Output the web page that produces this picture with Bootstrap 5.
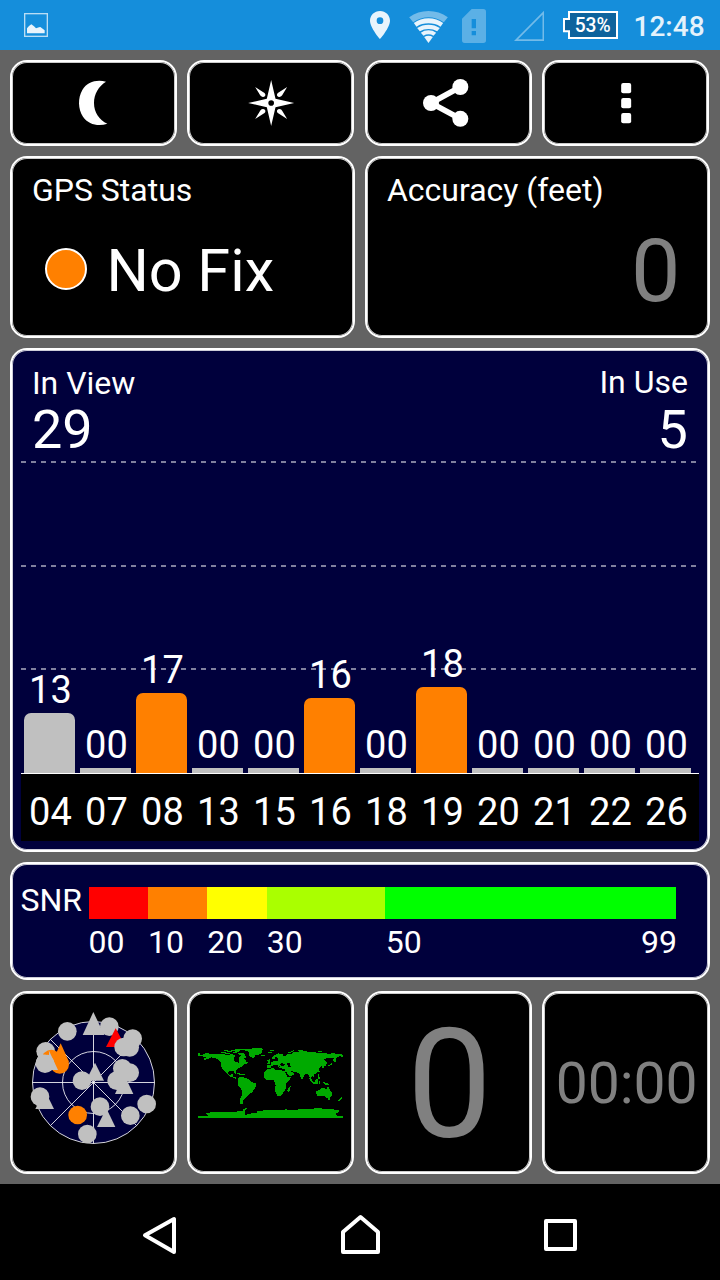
<!DOCTYPE html>
<html lang="en">
<head>
<meta charset="utf-8">
<meta name="viewport" content="width=device-width, initial-scale=1">
<title>GPS Status</title>
<link rel="stylesheet" href="https://cdn.jsdelivr.net/npm/bootstrap@5.3.0/dist/css/bootstrap.min.css">
<script src="https://cdn.jsdelivr.net/npm/bootstrap@5.3.0/dist/js/bootstrap.bundle.min.js"></script>
<style>
  body { font-family: Roboto, "Liberation Sans", sans-serif; background: #636363; color: #fff; width: 720px; height: 1280px; overflow: hidden; }
  svg { display: block; flex: none; }
  .statusbar { height: 50px; background: #158edb; }
  .clock { font-size: 28px; font-weight: 500; line-height: 50px; color: #e4f2fb; padding-top: 2px; }
  .dash { display: grid; grid-template-columns: repeat(4, minmax(0, 1fr)); grid-template-rows: 85.7px 181.6px 503.6px 118.1px 183px; gap: 10.4px 10.45px; height: 1134px; padding: 10px 10.55px 0 9.9px; }
  .tile { background: #000; border: 2px solid #fff; border-radius: 17px; box-shadow: inset 0 0 0 1px rgba(255,255,255,.8); overflow: hidden; }
  .navy { background: #00003c; }
  .span-2 { grid-column: span 2; margin-right: -.5px; }
  .span-4 { grid-column: span 4; margin-right: -.5px; }
  .label { font-size: 32px; line-height: 38px; }
  .dim { color: #808080; }
  .led { width: 42px; height: 42px; border-radius: 50%; background: #ff8000; border: 2px solid #fff; flex: none; }
  .fix { font-size: 59.4px; line-height: 60px; padding-top: 4px; }
  .acc { font-size: 88px; line-height: 88px; }
  .count { font-size: 54px; line-height: 54px; padding-top: 1px; }
  .head { height: 111px; padding: 14px 20px 0; }
  .plot { height: 312px; margin: 0 9px; padding-left: 3px; gap: 5px;
    --dashes: repeating-linear-gradient(90deg, #80809e 0 5px, transparent 5px 10px);
    background: var(--dashes) 0 0/675px 2px no-repeat, var(--dashes) 0 104px/675px 2px no-repeat, var(--dashes) 0 207px/675px 2px no-repeat; }
  .sat { width: 51px; flex: none; }
  .snr-val, .prn { font-size: 38px; line-height: 38px; text-align: center; padding-left: 2px; }
  .snr-val { margin-bottom: 4px; }
  .bar { background: #c0c0c0; }
  .bar.tall { border-radius: 7px 7px 0 0; }
  .bar.used { background: #ff8000; }
  .prns { height: 68px; margin: 0 8.5px 0 9px; padding: 19px 0 0 3px; gap: 5px; background: #000; border-top: 1px solid #fff; }
  .legend { padding: 23px 31px 0 8.5px; }
  .scale { width: 587.5px; height: 32px; }
  .ticks { width: 588.5px; margin-left: -.2px; padding-top: 4px; }
  .timer { font-size: 57px; line-height: 60px; }
  .big { font-size: 152px; line-height: 152px; }
  .navbar-sys { height: 96px; background: #000; padding: 0 60px; }
</style>
</head>
<body>
<header class="statusbar d-flex">
  <svg width="24" height="50" viewBox="72 0 72 150" style="margin-left:24px"><rect x="74" y="41" width="68" height="68" fill="none" stroke="#b9ddf4" stroke-width="4"/><path d="M81 100V85L87 78 94 73 102 79 108 85 117 82 121 81 128 86 134 91V100Z" fill="#e8f4fc"/></svg>
  <div class="d-flex ms-auto">
    <svg width="20" height="50" viewBox="30 0 60 150"><path fill-rule="evenodd" d="M60 33C43 33 30 46 30 62 30 83 60 117 60 117S90 83 90 62C90 46 77 33 60 33ZM60 52A10 10 0 1 1 60 72 10 10 0 0 1 60 52Z" fill="#e8f4fc"/></svg>
    <svg width="39" height="50" viewBox="148.500 0 117 150" style="margin-left:19px"><path d="M149 52Q175 33 207 33T265 52L253 67Q230 52 207 52T161 67Z" fill="#73bbe9"/><g fill="#e8f4fc"><path d="M163 69Q182 55 207 55T251 69L243 80Q227 70 207 70T171 80Z"/><path d="M173 84Q188 74 207 74T241 84L233 94Q221 87 207 87T181 94Z"/><path d="M184 98Q194 91 207 91T230 98L222 107Q215 103 207 103T192 107Z"/><path d="M194 111Q207 103 220 111L207 129Z"/></g></svg>
    <svg width="24" height="50" viewBox="306 0 72 150" style="margin-left:14px"><path fill-rule="evenodd" d="M335 27H370Q378 27 378 35V121Q378 129 370 129H314Q306 129 306 121V56ZM335 57V85H348V57ZM335 93V106H348V93Z" fill="#5bb0e6"/></svg>
    <svg width="30" height="50" viewBox="462 0 90 150" style="margin-left:28px"><path d="M550 38V120.500H468Z" fill="none" stroke="#73bbe9" stroke-width="5"/></svg>
    <svg width="55" height="50" viewBox="609 0 165 150" style="margin-left:19px"><path d="M627 36H771V114H627V94H612V57H627Z" fill="#0d639d" stroke="#fff" stroke-width="6"/><text x="644" y="96" textLength="108" lengthAdjust="spacingAndGlyphs" font-size="60" font-weight="500" fill="#fff">53%</text></svg>
    <div class="clock" style="margin-left:15.500px;width:86.500px">12:48</div>
  </div>
</header>

<main class="dash">
  <button class="tile d-flex align-items-center justify-content-center p-0" aria-label="Night mode">
    <svg width="60" height="60" viewBox="189 219 180 180"><path d="M318 245C290 238 262 245 247 270 233 294 234 327 249 350 265 374 296 380 322 371 298 361 282 337 282 309 282 282 296 258 318 245Z" fill="#fff"/></svg>
  </button>
  <button class="tile d-flex align-items-center justify-content-center p-0" aria-label="Compass">
    <svg width="60" height="60" viewBox="722.500 219 180 180"><path id="c" fill="#fff" fill-rule="evenodd" d="M813 240 826 296 882 309 826 322 813 378 800 322 744 309 800 296ZM813 300.500A8.500 8.500 0 1 0 813 317.500 8.500 8.500 0 0 0 813 300.500ZM765 261 793 279Q797 283 795 287T788 291Q782 290 780 286ZM861 261 833 279Q829 283 831 287T838 291Q844 290 846 286ZM765 357 793 339Q797 335 795 331T788 327Q782 328 780 332ZM861 357 833 339Q829 335 831 331T838 327Q844 328 846 332Z"/></svg>
  </button>
  <button class="tile d-flex align-items-center justify-content-center p-0" aria-label="Share">
    <svg width="60" height="60" viewBox="174 219 180 180"><path d="M301 261 213 309 301 356" fill="none" stroke="#fff" stroke-width="17"/><g fill="#fff"><circle cx="213" cy="309" r="24"/><circle cx="301" cy="261" r="24"/><circle cx="301" cy="356.500" r="24"/></g></svg>
  </button>
  <button class="tile d-flex align-items-center justify-content-center p-0" aria-label="More">
    <svg width="60" height="60" viewBox="707.500 219 180 180" fill="#fff"><rect x="783" y="249" width="30" height="31" rx="6"/><rect x="783" y="294" width="30" height="31" rx="6"/><rect x="783" y="339" width="30" height="31" rx="6"/></svg>
  </button>

  <section class="tile span-2" style="padding:13px 20px 0">
    <div class="label">GPS Status</div>
    <div class="d-flex align-items-center" style="margin:28px 0 0 13px;gap:19.500px"><div class="led"></div><div class="fix">No Fix</div></div>
  </section>
  <section class="tile span-2" style="padding:13px 27.500px 0 20px">
    <div class="label">Accuracy (feet)</div>
    <div class="acc dim text-end" style="margin-top:18px">0</div>
  </section>

  <section class="tile navy span-4">
    <div class="head d-flex justify-content-between">
      <div><div class="label">In View</div><div class="count">29</div></div>
      <div class="text-end"><div class="label" style="margin:-1px 0 1px">In Use</div><div class="count">5</div></div>
    </div>
    <div class="plot d-flex align-items-end" id="plot"></div>
    <div class="prns d-flex" id="prns"></div>
  </section>

  <section class="tile navy span-4 legend d-flex">
    <div class="label" style="width:68.500px;margin-top:-6px">SNR</div>
    <div>
      <div class="scale d-flex" id="scale"></div>
      <div class="ticks label d-flex" id="ticks"></div>
    </div>
  </section>

  <section class="tile">
    <svg width="163" height="179" viewBox="6 9 489 537">
      <g fill="none" stroke="#fff" stroke-width="2.500"><circle cx="250.500" cy="277.500" r="183" fill="#00003c"/><circle cx="250.500" cy="277.500" r="93"/><path d="M67 277.500H434M250.500 94V461M121 148 380 407M380 148 121 407"/></g>
      <g fill="#c0c0c0">
        <circle cx="172" cy="124" r="28"/><circle cx="298" cy="110" r="28"/><path d="M250 66 283 135H218Z"/>
        <path d="M317 115 347 171H288Z" fill="#f00"/>
        <circle cx="368" cy="146" r="28"/><circle cx="341" cy="171" r="28"/><circle cx="359" cy="172" r="28"/>
        <circle cx="107" cy="184" r="28"/>
        <g fill="#ff8000"><circle cx="124" cy="207" r="28"/><circle cx="149" cy="223" r="28"/><path d="M152 160 177 215H127Z"/></g>
        <circle cx="105" cy="221" r="28"/><path d="M117 182 144 240H90Z"/><path d="M98 192 117 184V195Z" fill="#ff8000"/>
        <circle cx="216" cy="272" r="28"/><path d="M255 218 282 272H228Z"/>
        <circle cx="337" cy="235" r="28"/><circle cx="359" cy="248" r="28"/><circle cx="320" cy="272" r="28"/><path d="M342 253 370 312H315Z"/>
        <circle cx="90" cy="320" r="28"/><path d="M104 300 132 357H76Z"/>
        <circle cx="410" cy="342" r="28"/><circle cx="361" cy="377" r="28"/>
        <circle cx="270" cy="350" r="28"/><path d="M289 355 316 411H261Z"/><circle cx="232" cy="432" r="28"/>
        <circle cx="203" cy="375" r="28" fill="#ff8000"/>
      </g>
    </svg>
  </section>
  <section class="tile">
    <svg width="163" height="179" viewBox="-2 -111 489 537" fill="#0a0" shape-rendering="crispEdges">
      <path d="M24 69H30V75H36V78H24ZM36 75 48 69 66 72H96L114 75 126 72 138 78 132 84V93L141 96 147 99 148 84 156 75 162 84 168 91 171 96 177 98 168 102 160 105 156 111 147 114 141 120 138 123 140 132H135L133 124 122 122 114 128 118 136 126 132 130 133 128 139 138 141 140 147 148 148H140L130 143 118 138 108 128 99 117 93 108 93 96 84 87 66 82 54 87 42 90 45 84 52 82 42 80Z"/>
      <path d="M93 66H108V69H93ZM102 60H114V63H102ZM105 70H120V73H105ZM111 64H126V67H111ZM123 60H135V63H123ZM129 66H141V69H129ZM135 57H168V60H153L147 66H135ZM144 68H156L165 72 171 84 162 84 156 75 144 73ZM141 128H150V131H157V134H147V131H141ZM156 132H165V135H156ZM162 60 180 56 212 54 222 57 216 60V69L210 73 198 75 192 84 184 81 177 75 178 66ZM214 75H225V79H216Z"/>
      <path d="M147 141 160 141 174 146 180 150 186 155 201 162 198 170 192 180 188 187 180 190 174 198 168 204 161 210V219L158 221H151L150 210 156 196 156 180 150 172 144 164 144 156Z"/>
      <path d="M232 118 246 115H254L257 120 276 121 286 124 288 132 293 140 303 142 300 150 290 160 288 176 281 188 273 197 262 197 258 186 256 180 258 166 252 150H230L222 142V128ZM297 172 303 169 301 181 296 187 293 181Z"/>
      <path fill-rule="evenodd" d="M233 115V105H244L242 98 251 94 261 93 267 90 262 82 258 80 254 88 248 87V81L255 75 267 70 282 74 279 80 288 78 294 73H306L312 67 324 66 333 61 345 62 354 66 372 65 384 69 402 68 414 71 432 70 459 74V80L450 79 444 82 435 84 440 90 435 97 430 92 432 84H414L402 88 412 98 408 107 402 109 403 115 398 114 396 109 390 112 388 123 380 130 372 132 374 142 366 138 364 148 360 142 355 131 346 132 338 147 333 144 330 132 320 126 310 126 315 132 300 140 291 127 286 124 284 116 272 115 265 109 274 112 262 105 255 105 244 108 243 114ZM272 103 276 99 286 104 284 107H274ZM293 98H300V108H303V112H297L293 104ZM303 123H307L313 126H305Z"/>
      <path d="M231 90H237V87H240V102H231V99H234V93H231ZM234 66H246V69H234ZM294 66H300L312 60V63L300 69H294ZM324 60H336V63H324ZM240 60H252V63H240ZM384 63H396V66H384ZM414 104H420L428 98V102L420 108H414ZM432 83H438V96H432ZM359 144H363L372 158 369 159 360 149ZM376 150 384 147V160H374ZM369 160H384V163H369ZM387 153H392V162H387ZM384 132H388V141H392V147H386ZM398 156 412 159 422 166H408ZM333 144H337V148H333ZM386 122H390V127H386ZM447 210 456 201V206L449 213H444Z"/>
      <path d="M379 184 390 179 395 173H405L409 178H412L414 170H417L421 180 426 186V196L418 206 409 203 402 197H393L382 199ZM415 205H421V209H415Z"/>
      <path d="M24 258H57L51 255V252H48V249H60V246H90L96 245H141L150 242 159 243 162 237 171 233V237L165 241V248L171 249 162 252 168 255 186 250 201 248V244L231 240H267L291 238 300 241 324 239 333 236 363 237 384 234 408 237 423 236 438 240H447V246L438 250V255L444 258H459V264H24Z"/>
    </svg>
  </section>
  <section class="tile d-flex justify-content-center" style="padding:16px 0 0 2px"><div class="big dim">0</div></section>
  <section class="tile d-flex justify-content-center" style="padding:61px 0 0 1px;margin-right:-.5px"><div class="timer dim">00:00</div></section>
</main>

<nav class="navbar-sys d-flex" aria-label="System">
  <svg width="200" height="96" viewBox="-120 12 600 288" fill="none" stroke="#fff" stroke-width="12" stroke-linejoin="round"><path d="M222 117V216L135 166Z"/></svg>
  <svg width="200" height="96" viewBox="480 12 600 288" fill="none" stroke="#fff" stroke-width="12" stroke-linejoin="round"><path d="M729 216V156L781.500 111 834 156V216Z"/></svg>
  <svg width="200" height="96" viewBox="1080 12 600 288" fill="none" stroke="#fff" stroke-width="12" stroke-linejoin="round"><rect x="1338" y="123" width="87" height="84"/></svg>
</nav>

<script>
  // [satellite id, SNR, bar height in px, used in solution]
  const sats = [['04','13',60,0],['07','00',5,0],['08','17',80,1],['13','00',5,0],['15','00',5,0],['16','16',75,1],
    ['18','00',5,0],['19','18',86,1],['20','00',5,0],['21','00',5,0],['22','00',5,0],['26','00',5,0]];
  document.getElementById('plot').innerHTML = sats.map(([id, snr, h, used]) =>
    `<div class="sat"><div class="snr-val">${snr}</div><div class="bar ${h > 5 ? 'tall' : ''} ${used ? 'used' : ''}" style="height:${h}px"></div></div>`).join('');
  document.getElementById('prns').innerHTML = sats.map(s => `<div class="sat prn">${s[0]}</div>`).join('');

  const bands = [[0,10,'#f00'],[10,20,'#ff8000'],[20,30,'#ff0'],[30,50,'#af0'],[50,99,'#0f0']];
  document.getElementById('scale').innerHTML = bands.map(([a, b, c]) => `<div style="width:${(b - a) / .99}%;background:${c}"></div>`).join('');
  document.getElementById('ticks').innerHTML = bands.map(([a, b]) =>
    `<div style="width:${(b - a) / .99}%">${b === 99 ? '<div class="d-flex justify-content-between"><span>50</span><span>99</span></div>' : String(a).padStart(2, '0')}</div>`).join('');
</script>
</body>
</html>
